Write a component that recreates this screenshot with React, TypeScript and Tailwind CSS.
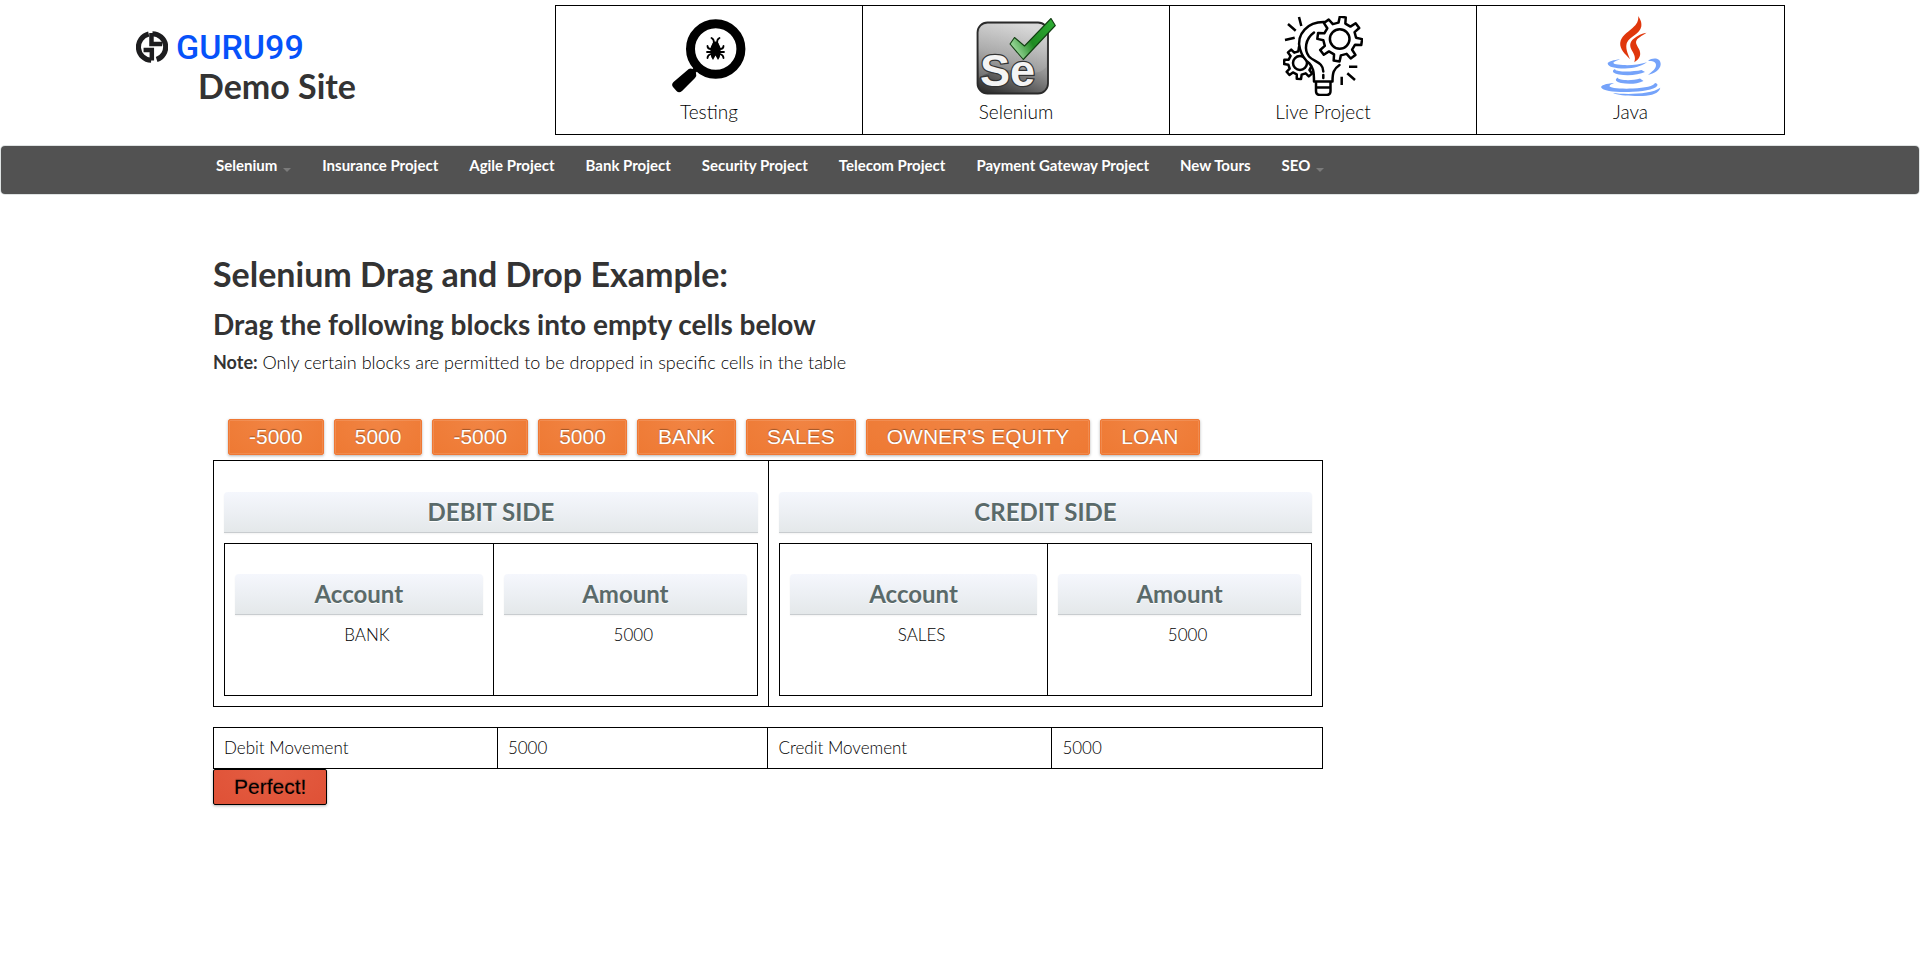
import React from 'react';

function gearPath(cx: number, cy: number, outer: number, inner: number, teeth: number, rotation: number): string {
  const step = (Math.PI * 2) / teeth;
  const points: string[] = [];
  for (let i = 0; i < teeth; i++) {
    const mid = i * step - Math.PI / 2 + (rotation * Math.PI) / 180;
    const corners: [number, number][] = [
      [inner, -0.27],
      [outer, -0.17],
      [outer, 0.17],
      [inner, 0.27],
    ];
    corners.forEach(([radius, offset]) => {
      const a = mid + offset * step;
      points.push(`${(cx + radius * Math.cos(a)).toFixed(2)} ${(cy + radius * Math.sin(a)).toFixed(2)}`);
    });
  }
  return `M${points.join('L')}Z`;
}

function GuruMark() {
  return (
    <svg viewBox="0 0 93 93" className="size-8 shrink-0" aria-hidden="true">
      <g fill="none" stroke="#1d1d1f">
        <path d="M37 9A38.500 38.500 0 0 0 44 85" strokeWidth="15" />
        <path d="M48 8A38.500 38.500 0 0 1 60 83" strokeWidth="15" />
        <path d="M22 55H46V86" strokeWidth="13" />
        <path d="M76 38H45V6" strokeWidth="13" />
      </g>
    </svg>
  );
}

function TestingIcon() {
  return (
    <svg viewBox="0 0 80 80" className="size-20" aria-hidden="true">
      <circle cx="46.7" cy="33" r="25.2" fill="none" stroke="#000" strokeWidth="9" />
      <path d="M28 52L20 60" stroke="#000" strokeWidth="5" />
      <path d="M18 54.500Q21 51 24 53.500L27 57Q28 60 26 62L13 75Q10 77.500 7.500 75L4 71Q2 68.500 4.500 66Z" />
      <path d="M46.500 25.500Q49.500 25.500 50 28.500Q52 31 51.500 36Q51.500 41 49 44L46.500 39.500L44 44Q41.500 41 41.500 36Q41 31 43 28.500Q43.500 25.500 46.500 25.500Z" />
      <path
        d="M45 27Q45 23 42.500 22M48 27Q48 23 50.500 22M42 33Q38.500 33 38.500 30M51 33Q54.500 33 54.500 30M42 36H38M51 36H55M42 38Q38.500 39 38.500 42M51 38Q54.500 39 54.500 42"
        fill="none"
        stroke="#000"
        strokeWidth="1.800"
        strokeLinecap="round"
      />
    </svg>
  );
}

function SeleniumIcon() {
  return (
    <svg viewBox="0 0 80 80" className="size-20" aria-hidden="true">
      <defs>
        <linearGradient id="seBody" x1="0.600" y1="0" x2="0.200" y2="1">
          <stop offset="0" stopColor="#cfcfcf" />
          <stop offset="0.500" stopColor="#929292" />
          <stop offset="1" stopColor="#303030" />
        </linearGradient>
        <linearGradient id="seGloss" x1="0" y1="0" x2="1" y2="1">
          <stop offset="0" stopColor="#fff" stopOpacity="0.300" />
          <stop offset="1" stopColor="#fff" stopOpacity="0.080" />
        </linearGradient>
        <linearGradient id="seCheck" x1="0" y1="0.500" x2="1" y2="0">
          <stop offset="0" stopColor="#8fd08f" />
          <stop offset="0.350" stopColor="#1f8a22" />
          <stop offset="1" stopColor="#2fb035" />
        </linearGradient>
      </defs>
      <rect x="1.500" y="6.500" width="70.500" height="71" rx="10" fill="url(#seBody)" stroke="#2a2a2a" strokeWidth="1.800" />
      <path d="M12 8H62Q70.500 8 70.500 16V51Q62 60 46 56Q20 50 3 62V17Q3 8 12 8Z" fill="url(#seGloss)" />
      <text
        x="4"
        y="70"
        fontFamily="Liberation Sans, Arial, sans-serif"
        fontWeight="700"
        fontSize="45"
        fill="#f4f4f4"
        stroke="#333"
        strokeWidth="2.400"
        paintOrder="stroke"
      >
        Se
      </text>
      <path
        d="M34 28L38.500 21.500L48.500 30L75 2.500L79.300 9.500L47.300 43.500Z"
        fill="url(#seCheck)"
        stroke="#123f12"
        strokeWidth="1.100"
        strokeLinejoin="round"
      />
    </svg>
  );
}

function LiveProjectIcon() {
  return (
    <svg viewBox="0 0 80 80" className="size-20" aria-hidden="true">
      <g fill="#fff" stroke="#000" strokeWidth="2.500" strokeLinejoin="round">
        <path d={gearPath(17, 47, 16, 11.8, 8, 4)} />
        <circle cx="17" cy="47" r="7" />
        <path d="M44 6.300C24 4 13 19 17 33C19 40 24 44 26 47C30 51 31 55 31 65.500H49.500C49.500 57 50.500 54 57 49L58 20Z" stroke="none" />
        <path
          d="M45 6.300C24 4 13 19 17 33C19 40 22 44 26 47C30 51 31 55 31 65.500H49.500C49.500 57 50.500 53 56.500 49"
          fill="none"
          strokeLinecap="round"
        />
        <path d="M31 16.500C22 23 21 34 26 40.500C31 46 40.300 46 40.300 55.500M40.300 59V62" fill="none" strokeLinecap="round" />
        <path d={gearPath(56.7, 23, 22.4, 16.4, 8, 8)} />
        <circle cx="56.700" cy="23" r="9.800" />
        <path d="M33 65.500V75Q33 79 37 79H43.500Q47.500 79 47.500 75V65.500M33 71.500H47.500" fill="none" />
        <path
          d="M5 8L12.700 14.700M16 1L18.300 10M2 24L11.700 21.700M66 50.700H74.300M64.300 57.300L72 64M58.700 60.700V69"
          fill="none"
        />
      </g>
    </svg>
  );
}

function JavaIcon() {
  return (
    <svg viewBox="0 0 80 80" className="size-20" aria-hidden="true">
      <path
        fill="#e0370c"
        d="M47.300 0C49 3 51 6 50.300 10.500C49 18 39 20 35.800 27C34.300 32 36.500 37 39 43.300C34 38 28.700 33 29.200 27C30 20 36 17 41.500 12C46 8 47.500 5 47.300 0Z"
      />
      <path
        fill="#e0370c"
        d="M55.500 16.700C51 20 45.500 22 45 26C45 30 49.500 33 49.200 38C49 42 46 44.500 43.300 46.300C44.500 42 44 40 41.500 35.500C38 30 38.500 26 43 22.500C46.500 19.500 51 17.500 55.500 16.700Z"
      />
      <g fill="#75a3fa">
        <path d="M29 43.300C23 44 16.500 45.500 16.700 47.700C17 51 25 52.500 34 52.400C43 52.300 51 50 56 46.200C48 48.500 40 49.500 32 49C24 48.500 21 47.500 23 46C24.500 44.800 27 44.300 29 43.300Z" />
        <path d="M57 45C62 41 69.500 42 69.700 48C69.500 54 63 57.500 57 59C61 55.500 65 53 65 49C65 45.500 61 44.500 57 45Z" />
        <path d="M24 53C20 55 22 57.500 28 58.500C37 60 48 59 54 56L50.500 54C44 55.500 33 56 28 55C24.500 54.500 24.500 54 24 53Z" />
        <path d="M27 61.500C23 63.500 25 66 30 67C38 68.500 46 68 52.500 65L49 62.500C43 64.500 34 64.500 30 63.500C27.500 63 27 62.500 27 61.500Z" />
        <path d="M23 67C15 67.500 9.500 69.500 10.200 71.500C11.500 75.500 28 76.500 42 75.800C56 75 66 72.500 66.500 69C66.500 68 65.500 67.300 64 67C63 70 54 72 42 72.500C29 73 18 72 18.500 70C19 68.500 21 68 23 67Z" />
        <path d="M22 77C32 78.500 60 79 69.300 71.800C68 79 56 80.500 44 80C35 79.700 26 79 22 77Z" />
      </g>
    </svg>
  );
}

const topics = [
  { label: 'Testing', Icon: TestingIcon },
  { label: 'Selenium', Icon: SeleniumIcon },
  { label: 'Live Project', Icon: LiveProjectIcon },
  { label: 'Java', Icon: JavaIcon },
];

const navItems: { label: string; menu?: boolean }[] = [
  { label: 'Selenium', menu: true },
  { label: 'Insurance Project' },
  { label: 'Agile Project' },
  { label: 'Bank Project' },
  { label: 'Security Project' },
  { label: 'Telecom Project' },
  { label: 'Payment Gateway Project' },
  { label: 'New Tours' },
  { label: 'SEO', menu: true },
];

const blocks = ['-5000', '5000', '-5000', '5000', 'BANK', 'SALES', "OWNER'S EQUITY", 'LOAN'];

const sides = [
  { title: 'DEBIT SIDE', account: 'BANK', amount: '5000' },
  { title: 'CREDIT SIDE', account: 'SALES', amount: '5000' },
];

const bar =
  'h-[41px] rounded-t-sm border-b border-[#c8cccf] bg-linear-to-b from-[#f5f7fd] to-[#e4e8ea] text-center text-2xl leading-10 font-bold text-[#5a6a6a] shadow-xs [text-shadow:0_1px_0_#fff]';

function Side({ title, account, amount }: { title: string; account: string; amount: string }) {
  return (
    <section className="border-black px-[10px] pt-[31px] pb-[10px] not-first:border-l">
      <h3 className={bar}>{title}</h3>
      <table className="mt-[10px] w-full table-fixed border-separate border-spacing-0 border border-black">
        <thead>
          <tr>
            <th className="w-[50.500%] border-r border-black px-[10px] pt-[30px]">
              <div className={bar}>Account</div>
            </th>
            <th className="px-[10px] pt-[30px]">
              <div className={bar}>Amount</div>
            </th>
          </tr>
        </thead>
        <tbody>
          <tr className="h-20 text-center align-top">
            <td className="border-r border-black pt-2 pr-[10px] pl-[26px]">{account}</td>
            <td className="pt-2 pr-[10px] pl-[26px]">{amount}</td>
          </tr>
        </tbody>
      </table>
    </section>
  );
}

export default function App() {
  return (
    <div className="min-h-screen bg-white font-[Lato,sans-serif] text-[17px] leading-6 font-light text-black">
      <header className="flex items-start pt-[5px] pr-[135px] pl-[136px]">
        <div className="min-w-0 flex-1 pt-6">
          <a href="#" className="flex items-center gap-2 font-[Roboto,sans-serif] text-[34px] leading-9 font-medium text-[#0652fa]">
            <GuruMark />
            GURU99
          </a>
          <h2 className="pl-[62px] text-[34px] leading-[42px] font-bold text-[#333]">Demo Site</h2>
        </div>
        <ul className="grid w-[1230px] max-w-[75%] grid-cols-4 border border-black">
          {topics.map(({ label, Icon }) => (
            <li key={label} className="border-r border-black last:border-r-0">
              <a href="#" className="flex flex-col items-center pt-[10px] pb-[6px] text-[19px] leading-8">
                <Icon />
                {label}
              </a>
            </li>
          ))}
        </ul>
      </header>

      <nav className="mx-px mt-[11px] rounded-sm bg-[#525252] shadow-[0_0_0_1px_#dfe3e3]">
        <ul className="flex h-12 gap-[31px] pl-[215px] text-[15px] leading-[39px] font-bold text-white">
          {navItems.map(({ label, menu }) => (
            <li key={label}>
              <a href="#" className="flex items-center">
                {label}
                {menu && (
                  <span className="mt-2 ml-[6px] border-x-4 border-t-4 border-x-transparent border-t-[#7b7b7b]" />
                )}
              </a>
            </li>
          ))}
        </ul>
      </nav>

      <main className="max-w-[1323px] pt-[60px] pb-10 pl-[213px]">
        <h1 className="text-[34px] leading-10 font-bold text-[#333]">Selenium Drag and Drop Example:</h1>
        <h2 className="mt-[10px] text-[28px] leading-10 font-bold text-[#333]">
          Drag the following blocks into empty cells below
        </h2>
        <p className="mt-1 text-lg leading-7">
          <b className="font-bold text-[#333]">Note:</b> Only certain blocks are permitted to be dropped in specific cells in the table
        </p>

        <ul className="mt-[43px] flex flex-wrap gap-[10px] pl-[15px] font-['Liberation_Sans',Arial,sans-serif] font-normal">
          {blocks.map((block, index) => (
            <li key={index}>
              <button
                type="button"
                className="block h-9 cursor-move rounded-xs border border-[#ef7834] bg-radial-[at_50%_0%] from-[#f18443] to-[#ee7933] px-5 text-[21px] leading-8 text-white shadow-[0_1px_3px_rgba(0,0,0,0.3),inset_0_0_0_1px_rgba(255,255,255,0.12)] [text-shadow:0_-1px_1px_rgba(0,0,0,0.35)]"
              >
                {block}
              </button>
            </li>
          ))}
        </ul>

        <div className="mt-[5px] grid grid-cols-2 border border-black">
          {sides.map((side) => (
            <Side key={side.title} {...side} />
          ))}
        </div>

        <table className="mt-5 w-full table-fixed border-collapse border border-black">
          <tbody>
            <tr className="h-[41px]">
              <td className="w-[25.600%] border border-black px-[10px]">Debit Movement</td>
              <td className="w-[24.400%] border border-black px-[10px]">5000</td>
              <td className="w-[25.600%] border border-black px-[10px]">Credit Movement</td>
              <td className="w-[24.400%] border border-black px-[10px]">5000</td>
            </tr>
          </tbody>
        </table>

        <button
          type="button"
          className="block h-9 rounded-xs border border-black bg-radial-[at_50%_0%] from-[#e45d42] to-[#df5136] px-5 font-['Liberation_Sans',Arial,sans-serif] text-[21px] leading-8 font-normal text-black shadow-[0_1px_3px_rgba(0,0,0,0.3)] [text-shadow:0_-1px_1px_rgba(0,0,0,0.3)]"
        >
          Perfect!
        </button>
      </main>
    </div>
  );
}
